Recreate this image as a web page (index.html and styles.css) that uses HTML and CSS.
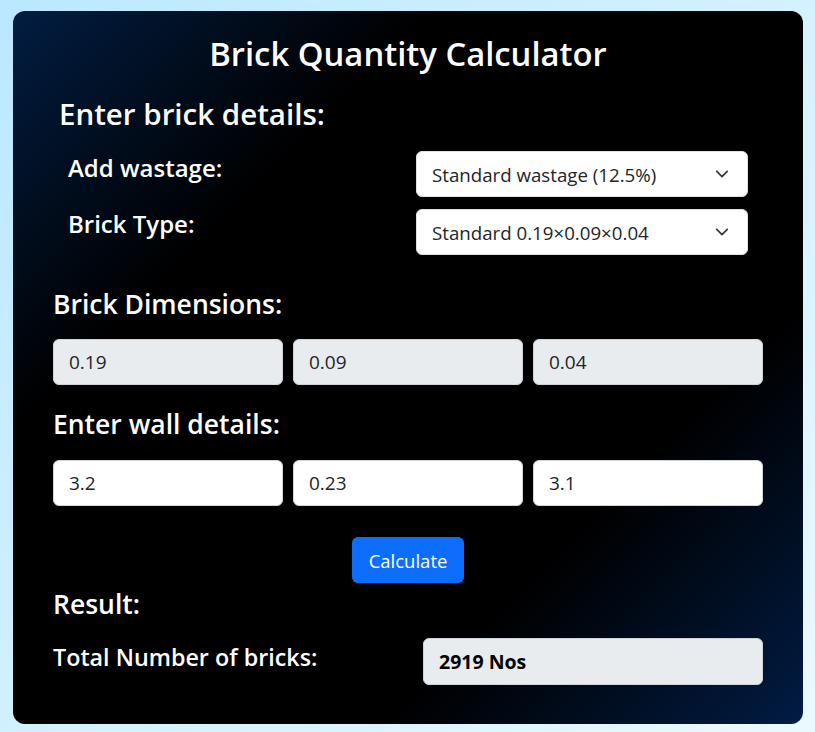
FILE: index.html
```html
<!DOCTYPE html>
<html lang="en">
<head>
<meta charset="utf-8">
<title>Brick Quantity Calculator</title>
<link rel="stylesheet" href="styles.css">
</head>
<body>
<main class="card">
  <h1 class="title">Brick Quantity Calculator</h1>
  <h2 class="section-head indent">Enter brick details:</h2>
  <div class="opts">
    <div class="opt-row">
      <label class="opt-label first">Add wastage:</label>
      <div class="select"><span>Standard wastage (12.5%)</span><svg class="chev" viewBox="0 0 16 16" width="16" height="16"><path d="M2 5l6 6 6-6" fill="none" stroke="#343a40" stroke-width="2" stroke-linecap="round" stroke-linejoin="round"/></svg></div>
    </div>
    <div class="opt-row">
      <label class="opt-label">Brick Type:</label>
      <div class="select"><span>Standard 0.19×0.09×0.04</span><svg class="chev" viewBox="0 0 16 16" width="16" height="16"><path d="M2 5l6 6 6-6" fill="none" stroke="#343a40" stroke-width="2" stroke-linecap="round" stroke-linejoin="round"/></svg></div>
    </div>
  </div>
  <h3 class="sub-head dims-head">Brick Dimensions:</h3>
  <div class="fields">
    <div class="field readonly">0.19</div>
    <div class="field readonly">0.09</div>
    <div class="field readonly">0.04</div>
  </div>
  <h3 class="sub-head wall-head">Enter wall details:</h3>
  <div class="fields">
    <div class="field">3.2</div>
    <div class="field">0.23</div>
    <div class="field">3.1</div>
  </div>
  <div class="actions"><button class="btn">Calculate</button></div>
  <h3 class="sub-head result-head">Result:</h3>
  <div class="result-row">
    <span class="result-label">Total Number of bricks:</span>
    <div class="result-box">2919 Nos</div>
  </div>
</main>
</body>
</html>
```
FILE: styles.css
```css
* { box-sizing: border-box; }
html, body { margin: 0; height: 100%; }
body {
  background: linear-gradient(135deg, #bbe8ff 0%, #d2f1ff 50%, #eaf9ff 100%);
  font-family: "Open Sans", "Noto Sans", sans-serif;
  padding: 11px 12px 8px 13px;
}
.card {
  width: 790px;
  height: 713px;
  border-radius: 12px;
  background: linear-gradient(135deg, #021d42 0%, #000 28%, #000 72%, #011c44 100%);
  color: #fff;
  padding: 0 40px;
  display: flex;
  flex-direction: column;
}
h1, h2, h3 { margin: 0; font-weight: 600; }
.title {
  font-size: 32.8px;
  line-height: 40px;
  text-align: center;
  margin-top: 23px;
}
.section-head {
  font-size: 29.5px;
  line-height: 36px;
  margin-top: 22px;
}
.indent { padding-left: 6px; }
.opts { display: flex; flex-direction: column; gap: 12px; margin-top: 19px; padding: 0 15px; }
.opt-row { display: grid; grid-template-columns: 348px 332px; align-items: start; }
.opt-label { font-size: 24px; font-weight: 600; line-height: 30px; padding-top: 0; }
.opt-label.first { padding-top: 2px; }
.select {
  height: 46px;
  background: #fff;
  border-radius: 6px;
  border: 1px solid #dee2e6;
  color: #212529;
  display: flex;
  align-items: center;
  justify-content: space-between;
  padding: 0 16px 0 15px;
  font-size: 18.7px;
}
.chev { width: 14px; height: 14px; margin-right: 2px; }
.sub-head { font-size: 26.5px; line-height: 36px; }
.dims-head { margin-top: 31px; }
.wall-head { margin-top: 21px; }
.fields { display: grid; grid-template-columns: repeat(3, 1fr); gap: 10px; margin-top: 17px; }
.wall-head + .fields { margin-top: 18px; }
.field {
  height: 46px;
  border-radius: 6px;
  border: 1px solid #ced4da;
  background: #fff;
  color: #212529;
  display: flex;
  align-items: center;
  padding: 0 15px;
  font-size: 19px;
}
.field.readonly { background: #e9ecef; }
.actions { display: flex; justify-content: center; margin-top: 31px; }
.btn {
  width: 112px;
  height: 46px;
  border: 0;
  border-radius: 6px;
  background: #0d6efd;
  color: #fff;
  font-family: inherit;
  font-size: 18.5px;
  padding: 0;
}
.result-head { margin-top: 3px; }
.result-row { display: grid; grid-template-columns: 370px 340px; margin-top: 16px; align-items: start; }
.result-label { font-size: 23.3px; font-weight: 600; line-height: 30px; padding-top: 4px; }
.result-box {
  height: 47px;
  border-radius: 6px;
  border: 1px solid #ced4da;
  background: #e9ecef;
  color: #000;
  font-weight: 700;
  font-size: 19.5px;
  display: flex;
  align-items: center;
  padding: 0 15px;
}
```
